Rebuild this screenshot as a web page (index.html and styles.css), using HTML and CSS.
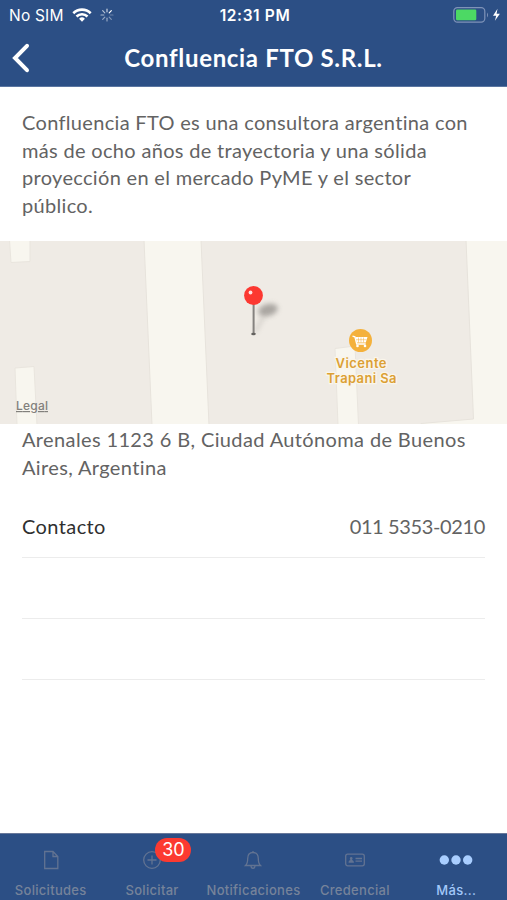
FILE: index.html
```html
<!DOCTYPE html>
<html lang="es">

<head>
    <meta charset="UTF-8">
    <meta name="viewport" content="width=device-width, initial-scale=1.0">
    <link rel="stylesheet" href="styles.css">
    <title>Confluencia FTO S.R.L.</title>
</head>

<body>
    <header class="header">
        <div class="status">
            <div class="status-left">
                <span class="carrier">No SIM</span>
                <svg class="wifi" width="20" height="14" viewBox="0 0 20 14" fill="none" stroke="#fff" stroke-width="2.6">
                    <path d="M1.3 5.2a12.4 12.4 0 0 1 17.4 0M4.5 8.5a7.8 7.8 0 0 1 11 0" />
                    <path d="M10 13.7l-2.9-2.9a4.1 4.1 0 0 1 5.8 0z" fill="#fff" stroke="none" />
                </svg>
                <svg class="spinner" width="14" height="14" viewBox="-7 -7 14 14" stroke="#fff" stroke-width="1.2" stroke-linecap="round">
                    <path d="M0-3.2V-6" opacity=".75" />
                    <path d="M2.2-2.2L4.3-4.3" />
                    <path d="M3.2 0H6" opacity=".3" />
                    <path d="M2.2 2.2L4.3 4.3" opacity=".4" />
                    <path d="M0 3.2V6" opacity=".5" />
                    <path d="M-2.2 2.2L-4.3 4.3" opacity=".5" />
                    <path d="M-3.2 0H-6" opacity=".6" />
                    <path d="M-2.2-2.2L-4.3-4.3" opacity=".65" />
                </svg>
            </div>
            <span class="time">12:31 PM</span>
            <div class="status-right">
                <svg width="48" height="16" viewBox="0 0 48 16">
                    <rect x=".8" y=".6" width="31" height="14.6" rx="3.6" fill="none" stroke="#7f93b8" stroke-width="1.2" />
                    <rect x="3" y="2.6" width="20.3" height="10.6" rx="1.2" fill="#4cd964" />
                    <path d="M34 5.4q2 2.5 0 5z" fill="#7f93b8" />
                    <path d="M44.5 1.8L40 8.7h3.2l-1.3 5.1 5-7h-3.3z" fill="#fff" />
                </svg>
            </div>
        </div>
        <div class="navbar">
            <svg class="back" width="20" height="32" viewBox="0 0 20 32" fill="none" stroke="#fff" stroke-width="4" stroke-linecap="round" stroke-linejoin="miter">
                <path d="M17 3.800L5 16l12 12.200" />
            </svg>
            <h1 class="title">Confluencia FTO S.R.L.</h1>
        </div>
    </header>

    <main class="content">
        <p class="description">Confluencia FTO es una consultora argentina con<br>más de ocho años de trayectoria y una sólida<br>proyección en el mercado PyME y el sector<br>público.</p>

        <svg class="map" width="507" height="183" viewBox="0 0 507 183">
            <defs>
                <filter id="soft" x="-50%" y="-50%" width="200%" height="200%">
                    <feGaussianBlur stdDeviation="2.5" />
                </filter>
            </defs>
            <rect width="507" height="183" fill="#f8f6ef" />
            <g fill="#efebe5" stroke="#e7e3dc" stroke-width="1">
                <path d="M-1-1H144L152 184H-1z" />
                <path d="M201-1H466L473.5 178 421 182.5V184H209z" />
            </g>
            <g fill="#f8f6ef" stroke="#e9e5de" stroke-width="1">
                <path d="M9.5-1L11 21.5 30 20.5V-1z" />
                <path d="M15 127L34 125.5 37 184H17z" />
                <path d="M335 107.5L355 105 358.5 184H338z" />
            </g>
            <ellipse cx="268" cy="69" rx="10" ry="6" transform="rotate(-15 268 69)" fill="#8d8985" opacity=".7" filter="url(#soft)" />
            <path d="M255 91L264 75" stroke="#8d8985" stroke-width="3" opacity=".3" filter="url(#soft)" />
            <rect x="252.6" y="62" width="2" height="31" fill="#85827f" />
            <ellipse cx="253.5" cy="93" rx="2.3" ry="1.2" fill="#64625f" />
            <circle cx="253.5" cy="54.5" r="9.4" fill="#fc3831" />
            <circle cx="250.5" cy="51.5" r="1.9" fill="#fff" opacity=".85" />
            <circle cx="360.5" cy="99.5" r="11.5" fill="#f4b13c" />
            <path d="M352.500 95.200l2.400.6 1.800 7.200h9" fill="none" stroke="#fff" stroke-width="1.3" />
            <path d="M355.300 96H367.500L365.800 101.500H356.700z" fill="#fff" />
            <path d="M358.500 96.500v5M361 96.500v5M363.500 96.500v5M356 98.700h10.500" stroke="#f4b13c" stroke-width=".5" />
            <circle cx="357.5" cy="105" r="1.3" fill="#fff" />
            <circle cx="365" cy="105" r="1.3" fill="#fff" />
            <g class="poi">
                <text x="361" y="127" textLength="51">Vicente</text>
                <text x="361.5" y="141.5" textLength="70">Trapani Sa</text>
            </g>
            <text class="legal" x="16" y="169" textLength="32">Legal</text>
        </svg>

        <p class="address">Arenales 1123 6 B, Ciudad Autónoma de Buenos<br>Aires, Argentina</p>

        <ul class="rows">
            <li class="row"><span class="label">Contacto</span><span class="phone">011 5353-0210</span></li>
            <li class="row"></li>
            <li class="row"></li>
        </ul>
    </main>

    <nav class="tabs">
        <div class="tab">
            <svg width="24" height="24" viewBox="0 0 24 24">
                <path d="M5.700 3.500h8.300l4.800 5v12H5.700zM14 3.500v5h4.800" />
            </svg>
            <span>Solicitudes</span>
        </div>
        <div class="tab">
            <svg width="24" height="24" viewBox="0 0 24 24">
                <circle cx="12" cy="12" r="8.3" />
                <path d="M12 7.500v9M7.500 12h9" />
            </svg>
            <span>Solicitar</span>
            <b class="badge">30</b>
        </div>
        <div class="tab">
            <svg width="24" height="24" viewBox="0 0 24 24">
                <path d="M4.500 17.500c1.600-1.500 2.200-3 2.200-7 0-3.500 2-6 5.300-6s5.300 2.500 5.300 6c0 4 .6 5.500 2.200 7zM10 18c.2 3 3.800 3 4 0M12 3v1.500" />
            </svg>
            <span>Notificaciones</span>
        </div>
        <div class="tab">
            <svg width="24" height="24" viewBox="0 0 24 24">
                <rect x="2.7" y="6.2" width="18.6" height="11.6" rx="2" />
                <path d="M5.500 14.700c0-2 1-2.300 2-2.700-1.200-1-.8-3 .7-3s1.900 2 .7 3c1 .4 2 .7 2 2.700z" class="solid" />
                <path d="M12.500 10.500h6.500M12.500 13.200h6.500" />
            </svg>
            <span>Credencial</span>
        </div>
        <div class="tab active">
            <svg width="34" height="24" viewBox="0 0 34 24">
                <circle cx="5.3" cy="12" r="4.7" />
                <circle cx="17" cy="12" r="4.7" />
                <circle cx="28.7" cy="12" r="4.7" />
            </svg>
            <span>Más...</span>
        </div>
    </nav>
</body>

</html>
```
FILE: styles.css
```css
* {
    box-sizing: border-box;
}

body {
    margin: 0;
    height: 900px;
    display: flex;
    flex-direction: column;
    overflow: hidden;
    background-color: #fff;
    font-family: Lato, "Liberation Sans", sans-serif;
}

.header {
    height: 87px;
    background-color: #2c4f85;
    color: #fff;
    border-bottom: 1px solid #5b76a1;
}

.status {
    height: 30px;
    padding: 0 6px 0 9px;
    display: grid;
    grid-template-columns: 1fr auto 1fr;
    align-items: center;
    font-family: Inter, "Liberation Sans", sans-serif;
    font-size: 15px;
}

.status-left {
    display: flex;
    align-items: center;
}

.carrier {
    font-size: 15.5px;
    letter-spacing: 0.2px;
}

.wifi {
    margin-left: 8px;
}

.spinner {
    margin-left: 8px;
}

.time {
    font-size: 15.5px;
    font-weight: 600;
    letter-spacing: 0.6px;
}

.status-right {
    display: flex;
    justify-content: flex-end;
}

.navbar {
    height: 56px;
    padding-left: 10px;
    display: grid;
    grid-template-columns: 20px 1fr 30px;
    align-items: center;
}

.title {
    margin: 0;
    text-align: center;
    font-size: 24px;
    line-height: 30px;
    font-weight: 700;
    letter-spacing: 0.67px;
}

.content {
    flex: 1;
    color: #636363;
    font-size: 20px;
    line-height: 27.5px;
    letter-spacing: 0.32px;
}

.description {
    margin: 0;
    height: 154px;
    padding: 22px 22px 0;
    white-space: nowrap;
}

.map {
    display: block;
}

.poi {
    font: 600 13px Inter, sans-serif;
    letter-spacing: 0;
    fill: #dca034;
    stroke: #faf5ea;
    stroke-width: 2.5px;
    paint-order: stroke;
    text-anchor: middle;
}

.legal {
    font: 500 12px Inter, sans-serif;
    letter-spacing: 0;
    fill: #82807c;
    text-decoration: underline;
}

.address {
    margin: 0;
    height: 73px;
    padding: 2px 22px 0;
    white-space: nowrap;
    letter-spacing: 0.37px;
}

.rows {
    margin: 0;
    padding: 0 22px;
    list-style: none;
}

.row {
    height: 61px;
    display: flex;
    justify-content: space-between;
    align-items: center;
    border-bottom: 1px solid #ececec;
}

.label {
    color: #2f2f2f;
    letter-spacing: 0.4px;
}

.phone {
    letter-spacing: -0.37px;
}

.tabs {
    height: 67px;
    border-top: 1px solid #68789a;
    background-color: #2c4f85;
    display: grid;
    grid-template-columns: repeat(5, 1fr);
    color: #76839a;
    font: 500 13px Inter, "Liberation Sans", sans-serif;
}

.tab {
    position: relative;
    padding-top: 14px;
    display: flex;
    flex-direction: column;
    align-items: center;
    gap: 10px;
}

.tab svg {
    fill: none;
    stroke: #627392;
    stroke-width: 1.3;
}

.tab .solid {
    fill: #627392;
    stroke: none;
}

.tab span {
    line-height: 16px;
    letter-spacing: 0.3px;
}

.tab.active {
    color: #a3c9fa;
}

.active svg {
    fill: #a9ceff;
    stroke: none;
}

.badge {
    position: absolute;
    top: 4px;
    left: 54px;
    width: 36px;
    height: 24px;
    border-radius: 12px;
    background-color: #fc3a31;
    color: #fff;
    font-size: 18px;
    font-weight: 400;
    line-height: 24px;
    text-align: center;
}
```
